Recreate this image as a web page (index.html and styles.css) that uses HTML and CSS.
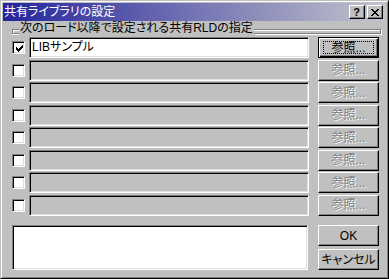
FILE: index.html
```html
<!DOCTYPE html>
<html lang="ja">
<head>
<meta charset="utf-8">
<title>共有ライブラリの設定</title>
<link rel="stylesheet" href="styles.css">
</head>
<body>
<div class="window">
  <div class="titlebar">
    <span class="title">共有ライブラリの設定</span>
    <div class="caption-btns">
      <button class="cap-btn help">?</button>
      <button class="cap-btn close"><svg width="8" height="7" viewBox="0 0 8 7" shape-rendering="crispEdges"><path d="M0 0h2v1H0zM1 1h2v1H1zM2 2h4v1H2zM3 3h2v1H3zM2 4h4v1H2zM1 5h2v1H1zM0 6h2v1H0zM6 0h2v1H6zM5 1h2v1H5zM5 5h2v1H5zM6 6h2v1H6z"/></svg></button>
    </div>
  </div>
  <div class="content">
    <div class="group">
      <span class="etch stub"></span>
      <span class="group-label">次のロード以降で設定される共有RLDの指定</span>
      <span class="etch rest"></span>
    </div>
    <div class="rows">
      <div class="row">
        <span class="check"><svg width="7" height="7" viewBox="0 0 7 7" shape-rendering="crispEdges"><path d="M0 2h1v3H0zM1 3h1v3H1zM2 4h1v3H2zM3 3h1v3H3zM4 2h1v3H4zM5 1h1v3H5zM6 0h1v3H6z"/></svg></span>
        <div class="field">LIBサンプル</div>
        <button class="btn default"><span class="focus">参照...</span></button>
      </div>
      <div class="row">
        <span class="check"></span>
        <div class="field disabled"></div>
        <button class="btn disabled">参照...</button>
      </div>
      <div class="row">
        <span class="check"></span>
        <div class="field disabled"></div>
        <button class="btn disabled">参照...</button>
      </div>
      <div class="row">
        <span class="check"></span>
        <div class="field disabled"></div>
        <button class="btn disabled">参照...</button>
      </div>
      <div class="row">
        <span class="check"></span>
        <div class="field disabled"></div>
        <button class="btn disabled">参照...</button>
      </div>
      <div class="row">
        <span class="check"></span>
        <div class="field disabled"></div>
        <button class="btn disabled">参照...</button>
      </div>
      <div class="row">
        <span class="check"></span>
        <div class="field disabled"></div>
        <button class="btn disabled">参照...</button>
      </div>
      <div class="row">
        <span class="check"></span>
        <div class="field disabled"></div>
        <button class="btn disabled">参照...</button>
      </div>
    </div>
    <div class="bottom">
      <div class="memo"></div>
      <div class="actions">
        <button class="btn">OK</button>
        <button class="btn">キャンセル</button>
      </div>
    </div>
  </div>
</div>
</body>
</html>
```
FILE: styles.css
```css
* { box-sizing: border-box; }

html, body {
  margin: 0;
  padding: 0;
  background: #c0c0c0;
}

body {
  font-family: "Liberation Sans", "Noto Sans CJK JP", sans-serif;
  font-size: 12px;
  font-feature-settings: "palt";
  color: #000;
}

.window {
  width: 389px;
  height: 279px;
  background: #c0c0c0;
  border: 1px solid;
  border-color: #c0c0c0 #000 #000 #c0c0c0;
  box-shadow: inset 1px 1px 0 #fff, inset -1px -1px 0 #808080;
  padding: 2px;
}

.titlebar {
  height: 18px;
  display: flex;
  align-items: center;
  justify-content: space-between;
  padding: 0 3px 0 1px;
  background: linear-gradient(to right, #24249c, #c4c4cc);
}

.title {
  color: #fff;
  font-size: 12px;
  line-height: 14px;
}

.caption-btns {
  display: flex;
  gap: 2px;
}

.cap-btn {
  appearance: none;
  margin: 0;
  padding: 0;
  width: 16px;
  height: 14px;
  background: #c0c0c0;
  border: 1px solid;
  border-color: #fff #000 #000 #fff;
  box-shadow: inset -1px -1px 0 #808080;
  display: flex;
  align-items: center;
  justify-content: center;
}

.help {
  font-family: "Liberation Sans", sans-serif;
  font-weight: bold;
  font-size: 11px;
  line-height: 11px;
  color: #000;
  padding-right: 1px;
}

.close svg {
  display: block;
  margin-left: -1px;
}

.content {
  padding: 0 5px 0 9px;
}

.group {
  display: flex;
  height: 16px;
  align-items: flex-start;
}

.etch {
  margin-top: 8px;
  height: 5px;
  border-top: 1px solid #808080;
  border-bottom: 1px solid #808080;
}

.stub {
  width: 7px;
  border-left: 1px solid #808080;
  box-shadow: inset 1px 1px 0 #fff, 0 1px 0 #fff;
}

.rest {
  flex: 1;
  border-right: 1px solid #808080;
  box-shadow: inset 0 1px 0 #fff, 1px 1px 0 #fff;
}

.group-label {
  padding: 0 1px;
  line-height: 14px;
  white-space: nowrap;
}

.rows {
  display: grid;
  grid-auto-rows: 21px;
  row-gap: 1.5px;
}

.row {
  display: flex;
  align-items: center;
}

.check {
  width: 13px;
  height: 13px;
  margin-right: 4px;
  background: #fff;
  border: 1px solid;
  border-color: #808080 #fff #fff #808080;
  box-shadow: inset 1px 1px 0 #000, inset -1px -1px 0 #dfdfdf;
  display: flex;
  align-items: center;
  justify-content: center;
}

.check svg {
  display: block;
  margin: 1px 0 0 1px;
}

.field {
  width: 280px;
  height: 21px;
  background: #fff;
  border: 1px solid;
  border-color: #808080 #fff #fff #808080;
  box-shadow: inset 1px 1px 0 #000, inset -1px -1px 0 #dfdfdf;
  padding: 0 2px;
  line-height: 19px;
  white-space: nowrap;
}

.field.disabled {
  background: #c0c0c0;
}

.btn {
  appearance: none;
  margin: 0;
  padding: 0;
  font: inherit;
  width: 61px;
  height: 21px;
  background: #c0c0c0;
  color: #000;
  border: 1px solid;
  border-color: #fff #000 #000 #fff;
  box-shadow: inset -1px -1px 0 #808080;
  display: flex;
  align-items: center;
  justify-content: center;
  line-height: 14px;
}

.row .btn {
  margin-left: 9px;
}

.btn.default {
  border-color: #000;
  box-shadow: inset 1px 1px 0 #fff, inset -1px -1px 0 #000, inset -2px -2px 0 #808080;
  padding: 3px;
}

.focus {
  flex: 1;
  align-self: stretch;
  border: 1px dotted #000;
  display: flex;
  align-items: center;
  justify-content: center;
  margin: 0 1px 0 1px;
}

.btn.disabled {
  color: #808080;
  text-shadow: 1px 1px 0 #fff;
}

.bottom {
  display: flex;
  margin-top: 9.5px;
}

.memo {
  width: 296px;
  height: 45px;
  background: #fff;
  border: 1px solid;
  border-color: #808080 #fff #fff #808080;
  box-shadow: inset 1px 1px 0 #000, inset -1px -1px 0 #dfdfdf;
}

.actions {
  margin-left: 10px;
  display: flex;
  flex-direction: column;
  gap: 3px;
}
```
